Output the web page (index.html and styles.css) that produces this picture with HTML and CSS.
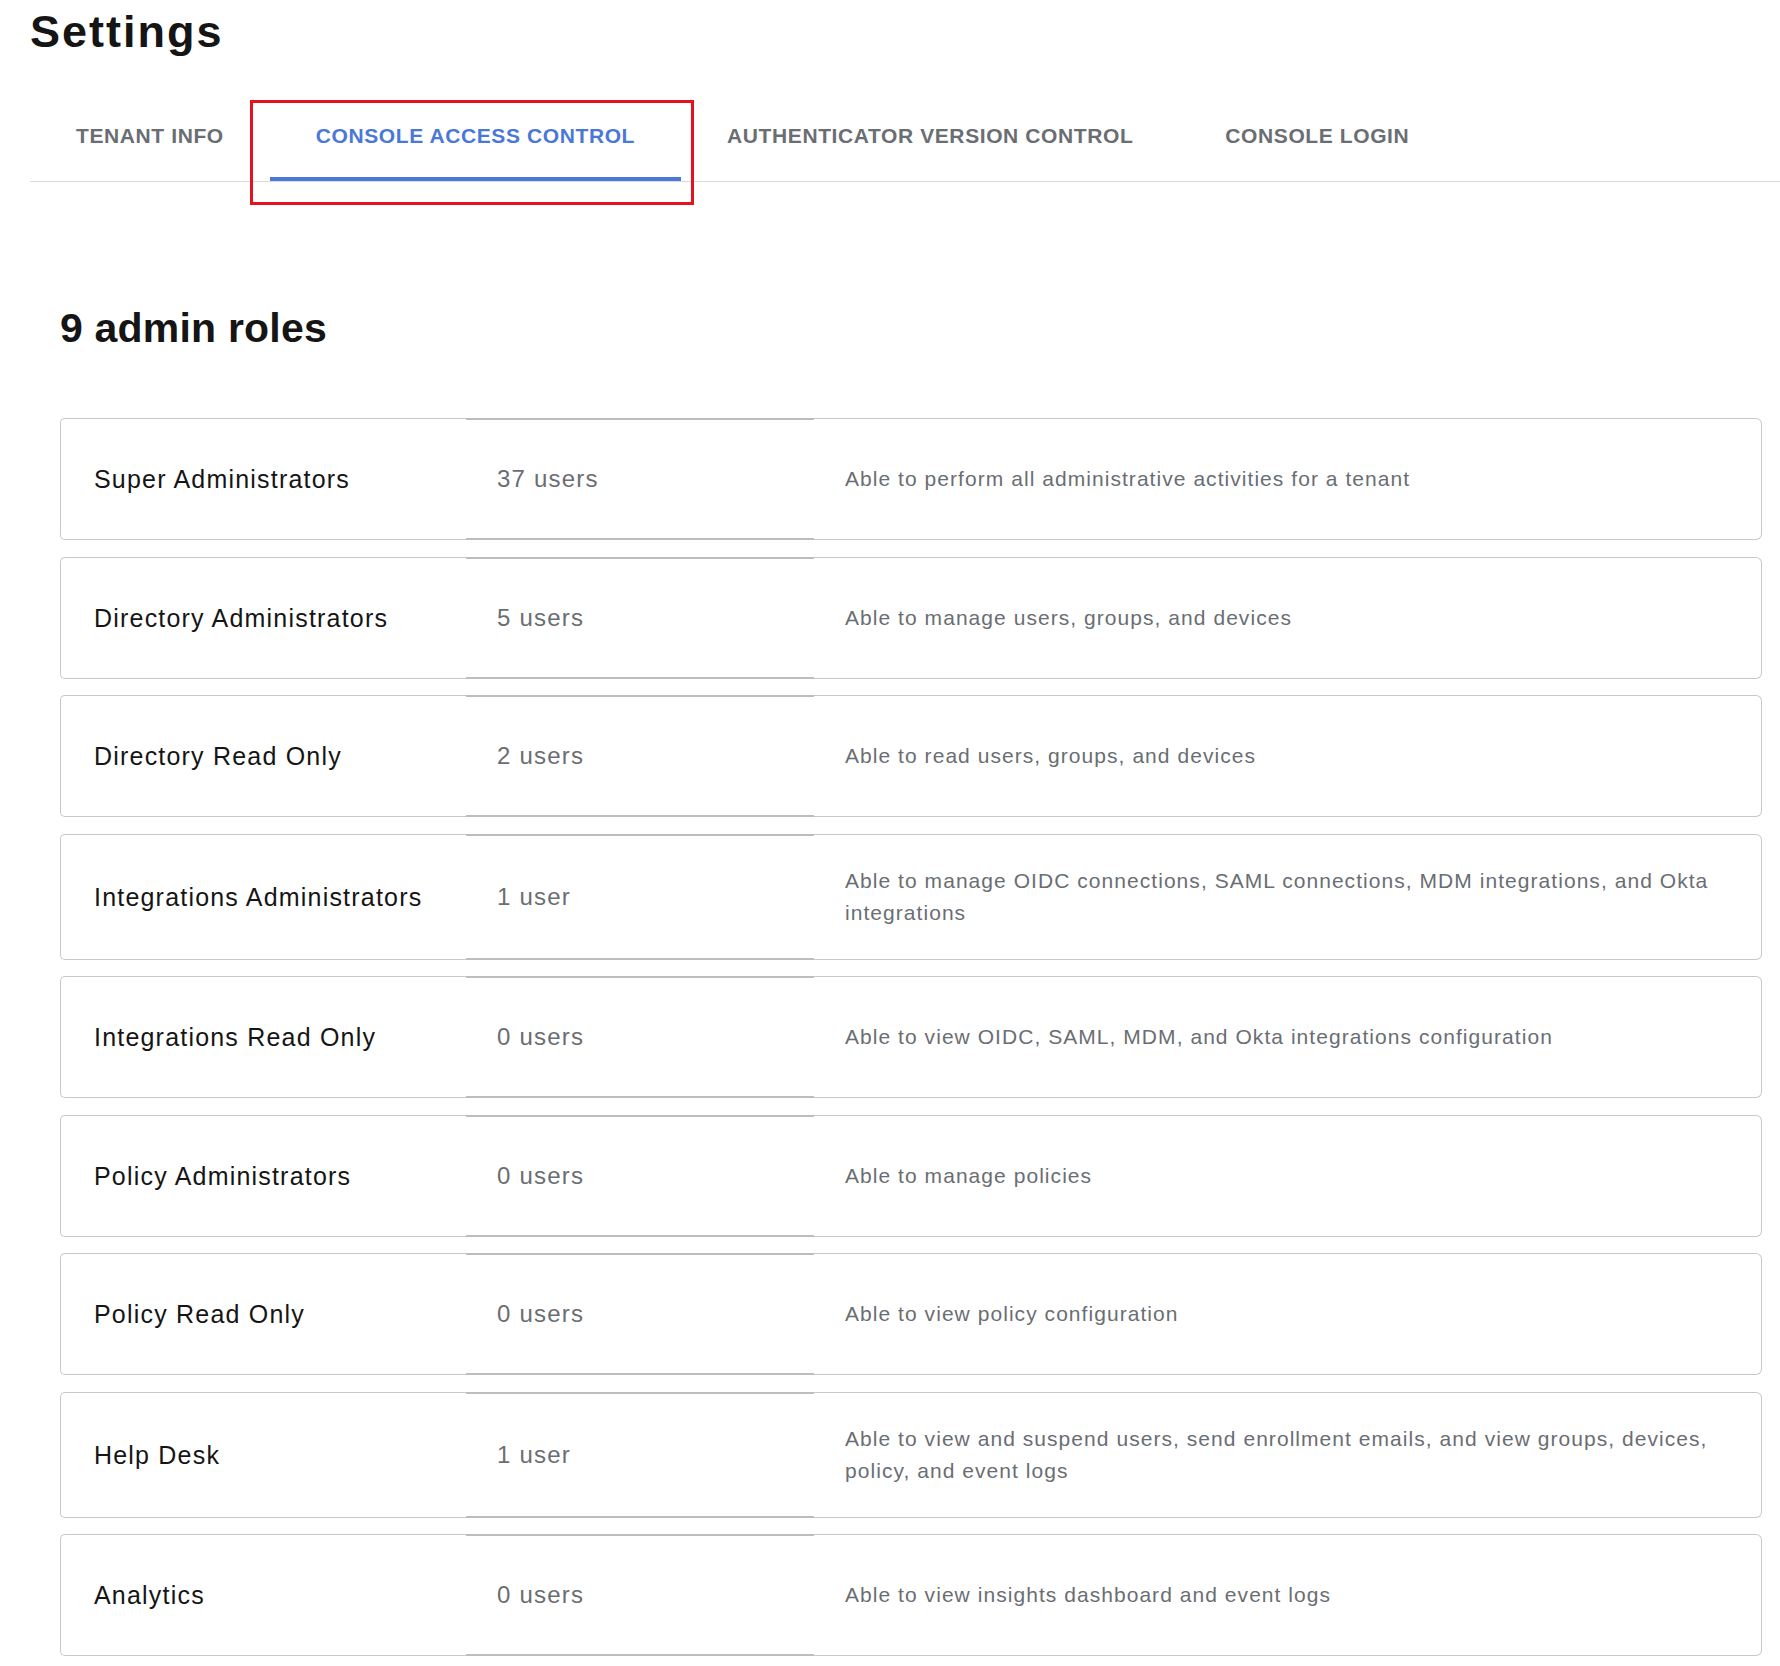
FILE: index.html
```html
<!DOCTYPE html>
<html lang="en">
<head>
<meta charset="utf-8">
<title>Settings</title>
<link rel="stylesheet" href="styles.css">
</head>
<body>
<div class="page">
  <h1 class="page-title">Settings</h1>
  <nav class="tabs">
    <a class="tab">TENANT INFO</a>
    <a class="tab active">CONSOLE ACCESS CONTROL</a>
    <a class="tab">AUTHENTICATOR VERSION CONTROL</a>
    <a class="tab">CONSOLE LOGIN</a>
  </nav>
  <section class="roles">
    <h2 class="roles-title">9 admin roles</h2>
    <div class="role-list">
      <div class="role">
        <div class="cell name">Super Administrators</div>
        <div class="cell count">37 users</div>
        <div class="cell desc">Able to perform all administrative activities for a tenant</div>
      </div>
      <div class="role">
        <div class="cell name">Directory Administrators</div>
        <div class="cell count">5 users</div>
        <div class="cell desc">Able to manage users, groups, and devices</div>
      </div>
      <div class="role">
        <div class="cell name">Directory Read Only</div>
        <div class="cell count">2 users</div>
        <div class="cell desc">Able to read users, groups, and devices</div>
      </div>
      <div class="role">
        <div class="cell name">Integrations Administrators</div>
        <div class="cell count">1 user</div>
        <div class="cell desc">Able to manage OIDC connections, SAML connections, MDM integrations, and Okta integrations</div>
      </div>
      <div class="role">
        <div class="cell name">Integrations Read Only</div>
        <div class="cell count">0 users</div>
        <div class="cell desc">Able to view OIDC, SAML, MDM, and Okta integrations configuration</div>
      </div>
      <div class="role">
        <div class="cell name">Policy Administrators</div>
        <div class="cell count">0 users</div>
        <div class="cell desc">Able to manage policies</div>
      </div>
      <div class="role">
        <div class="cell name">Policy Read Only</div>
        <div class="cell count">0 users</div>
        <div class="cell desc">Able to view policy configuration</div>
      </div>
      <div class="role">
        <div class="cell name">Help Desk</div>
        <div class="cell count">1 user</div>
        <div class="cell desc">Able to view and suspend users, send enrollment emails, and view groups, devices, policy, and event logs</div>
      </div>
      <div class="role">
        <div class="cell name">Analytics</div>
        <div class="cell count">0 users</div>
        <div class="cell desc">Able to view insights dashboard and event logs</div>
      </div>
    </div>
  </section>
</div>
<div class="highlight"></div>
</body>
</html>
```
FILE: styles.css
```css
* {
  box-sizing: border-box;
}

html, body {
  margin: 0;
  padding: 0;
  background: #ffffff;
}

body {
  font-family: "Liberation Sans", Arial, sans-serif;
  color: #151515;
  position: relative;
}

.page {
  padding-left: 30px;
}

.page-title {
  margin: 0;
  padding-top: 9px;
  font-size: 45px;
  line-height: 45px;
  font-weight: 700;
  letter-spacing: 2px;
  color: #151515;
}

.tabs {
  display: flex;
  margin-top: 70px;
  border-bottom: 1px solid #dadada;
}

.tab {
  display: block;
  padding: 0 46px 29px;
  font-size: 21px;
  line-height: 24px;
  font-weight: 700;
  letter-spacing: 0.6px;
  color: #6a6e73;
  border-bottom: 4px solid transparent;
  white-space: nowrap;
}

.tab.active {
  color: #4b78d6;
  border-bottom-color: #4b78d6;
}

.roles {
  padding: 0 18px 0 30px;
}

.roles-title {
  margin: 126px 0 69px;
  font-size: 41px;
  line-height: 41px;
  font-weight: 700;
  letter-spacing: 0.2px;
  color: #151515;
}

.role-list {
  display: flex;
  flex-direction: column;
  gap: 16.5px;
}

.role {
  display: grid;
  grid-template-columns: 406px 348px 1fr;
  min-height: 122px;
}

.cell {
  display: flex;
  align-items: center;
  padding: 30px 32px 30px 31px;
  line-height: 32px;
}

.cell.name {
  padding-left: 33px;
  border: 1px solid #c8c8c8;
  border-right: none;
  border-radius: 5px 0 0 5px;
  font-size: 25px;
  letter-spacing: 1.2px;
  color: #151515;
}

.cell.count {
  border-top: 2px solid #bdbdbd;
  border-bottom: 2px solid #bdbdbd;
  font-size: 24px;
  letter-spacing: 1.2px;
  color: #6a6e73;
}

.cell.desc {
  border: 1px solid #c8c8c8;
  border-left: none;
  border-radius: 0 6px 6px 0;
  font-size: 21px;
  letter-spacing: 1.05px;
  color: #6a6e73;
}

.highlight {
  position: absolute;
  left: 250px;
  top: 100px;
  width: 444px;
  height: 105px;
  border: 3px solid #e3141f;
  pointer-events: none;
}
```
